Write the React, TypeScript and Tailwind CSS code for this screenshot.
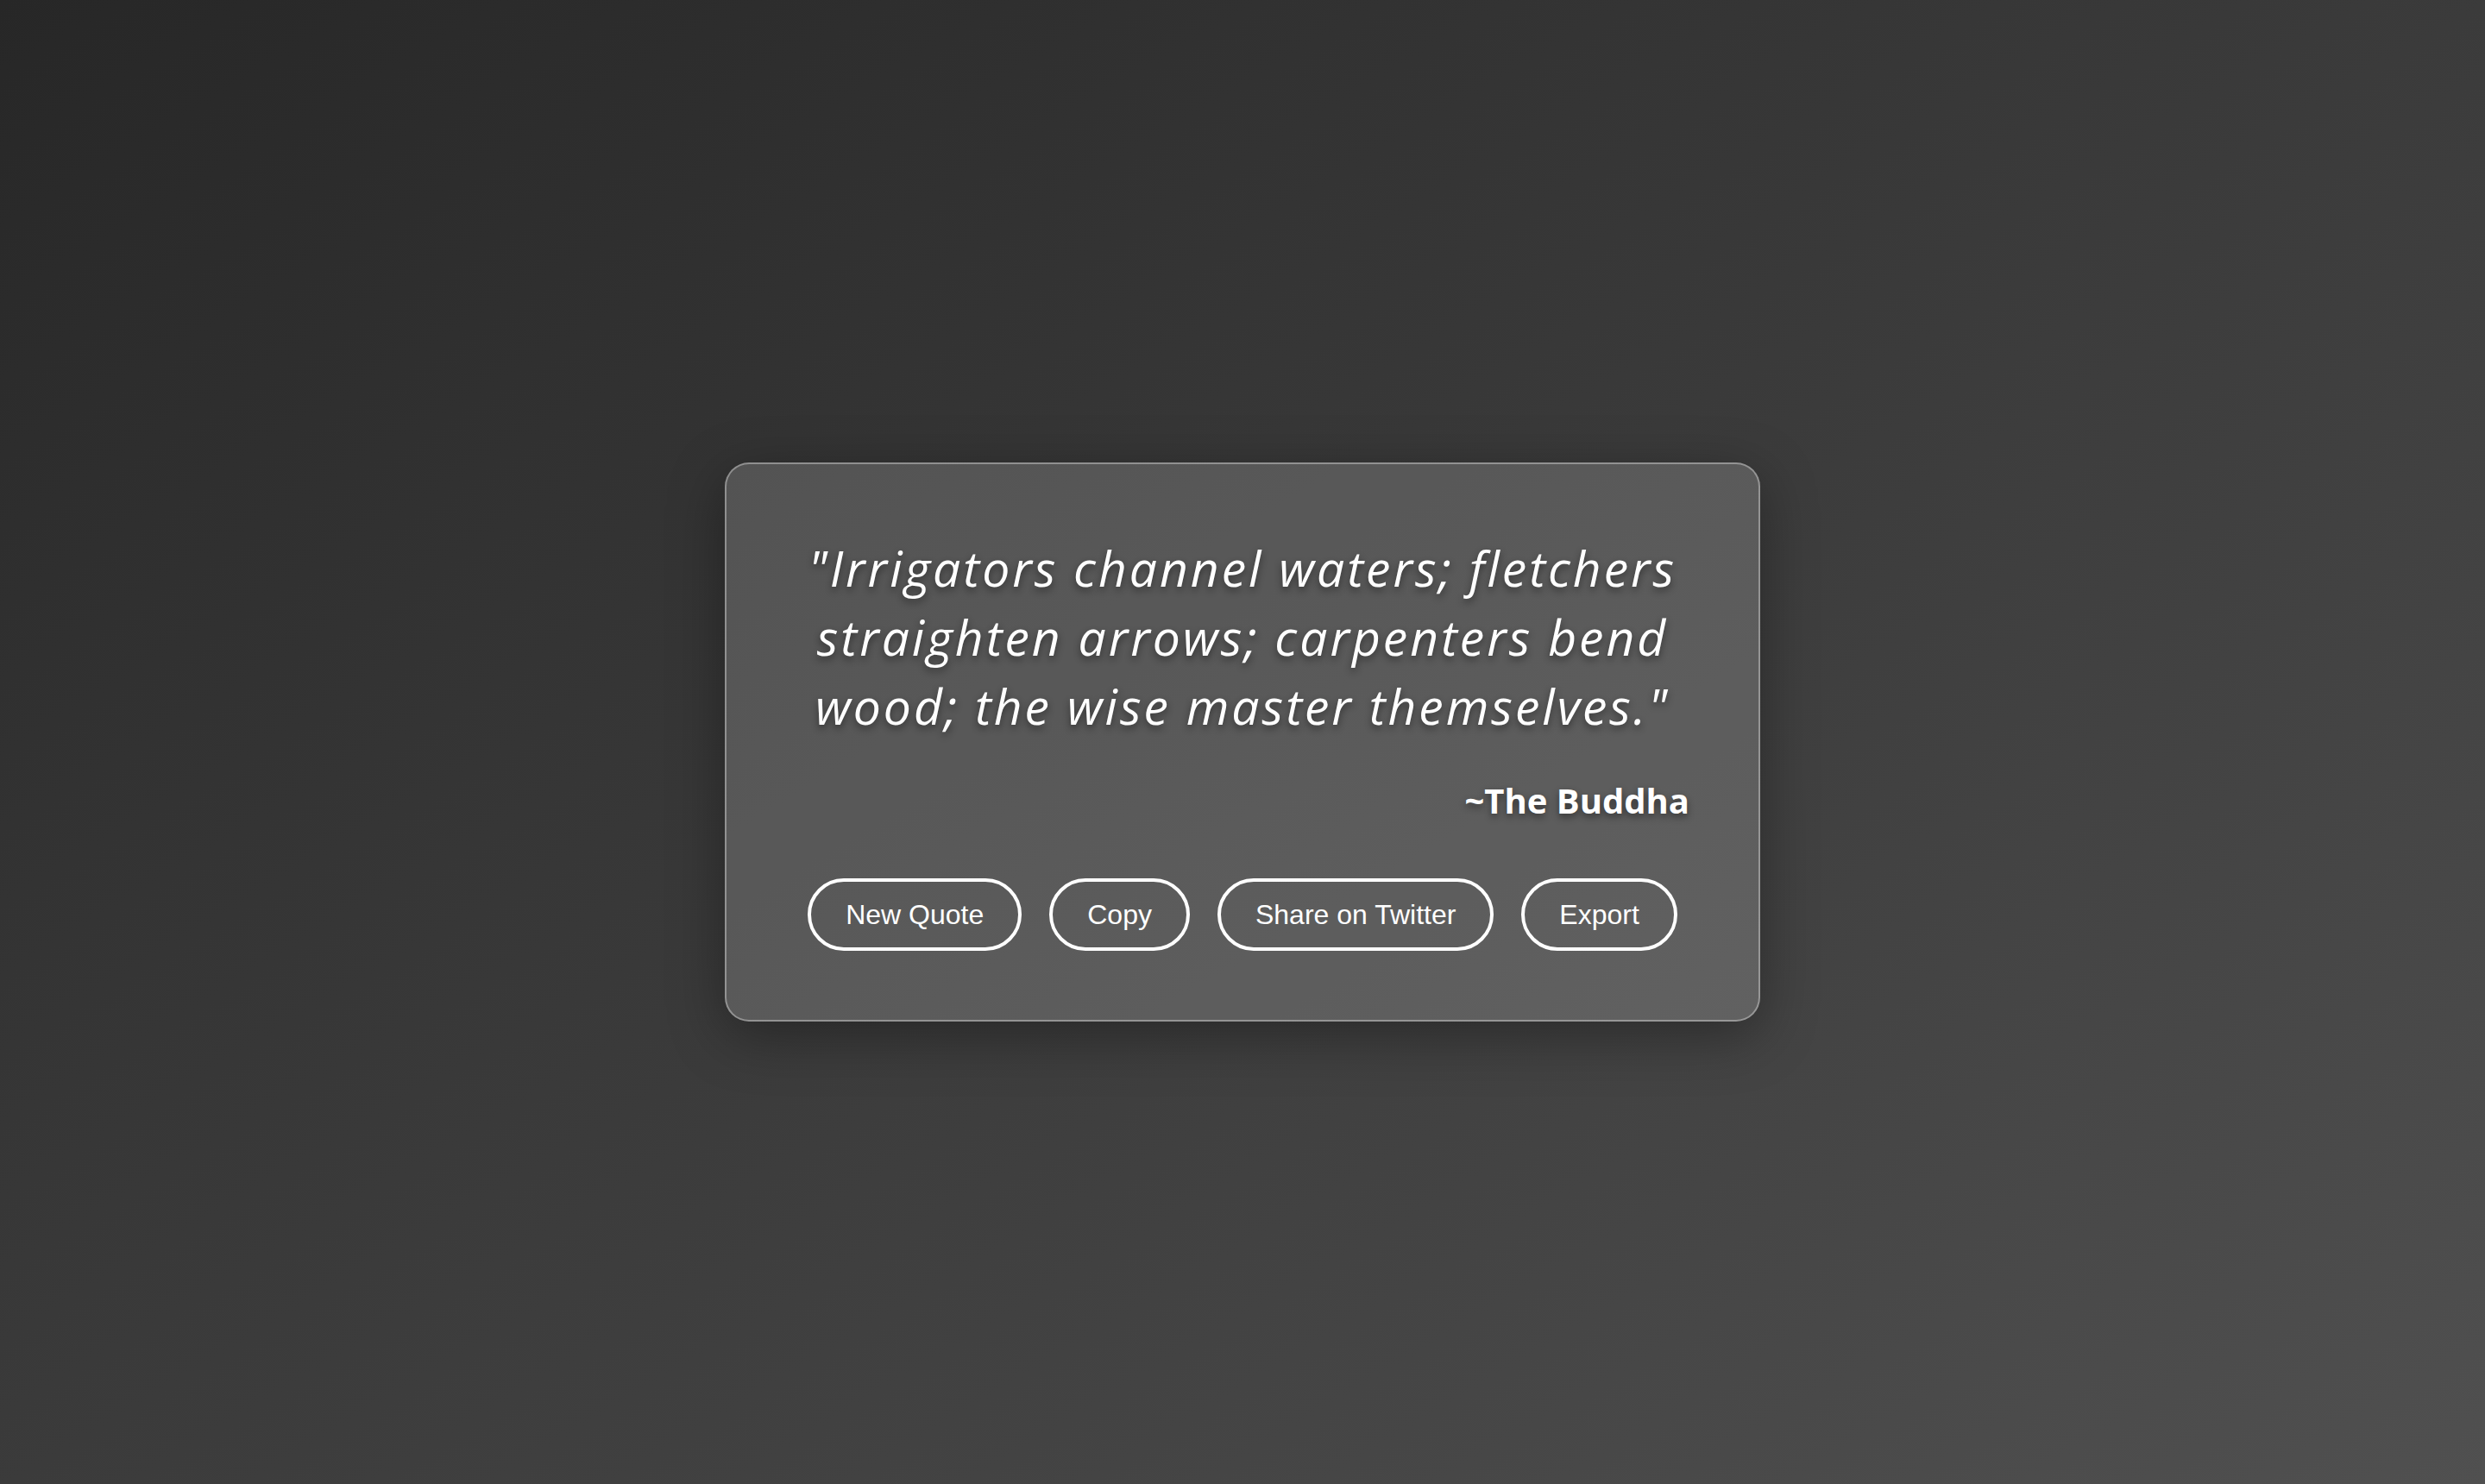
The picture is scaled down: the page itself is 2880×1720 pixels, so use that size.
const buttons = ["New Quote", "Copy", "Share on Twitter", "Export"];

export default function App() {
  return (
    <div className="min-h-screen w-full flex items-center justify-center bg-linear-to-br from-[#272727] to-[#505050]">
      <div className="w-[1200px] rounded-[28px] border-2 border-white/35 bg-white/[0.16] p-[80px] shadow-[0_16px_64px_rgba(0,0,0,0.35)]">
        <p className="-mx-[40px] whitespace-nowrap text-center text-white italic font-medium font-['Open_Sans',sans-serif] text-[57px] leading-[80px] tracking-[3px] [text-shadow:0_4px_8px_rgba(0,0,0,0.45)]">
          "Irrigators channel waters; fletchers
          <br />
          straighten arrows; carpenters bend
          <br />
          wood; the wise master themselves."
        </p>
        <p className="mt-[40px] text-right text-white font-bold font-['Open_Sans',sans-serif] text-[40px] leading-[60px] [text-shadow:0_4px_8px_rgba(0,0,0,0.45)]">
          ~The Buddha
        </p>
        <div className="mt-[60px] flex justify-center gap-[32px]">
          {buttons.map((label) => (
            <button
              key={label}
              className="rounded-full border-4 border-white bg-transparent px-[40px] py-[20px] text-[32px] leading-[36px] text-white font-['Liberation_Sans',Arial,sans-serif]"
            >
              {label}
            </button>
          ))}
        </div>
      </div>
    </div>
  );
}
